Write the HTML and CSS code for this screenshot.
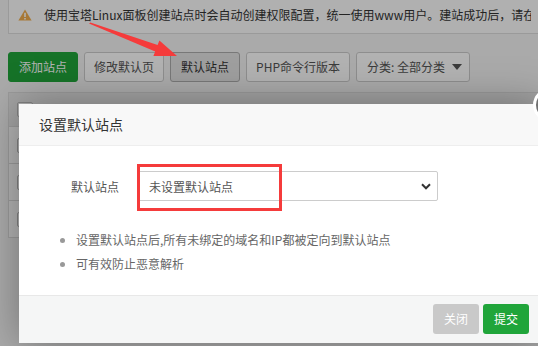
FILE: index.html
```html
<!DOCTYPE html>
<html lang="zh-CN">
<head>
<meta charset="utf-8">
<title>设置默认站点</title>
<link rel="stylesheet" href="styles.css">
</head>
<body>
<div class="page">
  <div class="alert">
    <svg class="warn" width="14" height="12" viewBox="0 0 14 12"><path d="M7 0.5 L13.6 11.5 L0.4 11.5 Z" fill="#f0ad4e"/><rect x="6.2" y="3.8" width="1.6" height="4.2" fill="#fff"/><rect x="6.2" y="9" width="1.6" height="1.5" fill="#fff"/></svg>
    <span class="alert-text">使用宝塔Linux面板创建站点时会自动创建权限配置，统一使用www用户。建站成功后，请在网站设置中开启防跨站</span>
  </div>
  <div class="toolbar">
    <button class="btn btn-green">添加站点</button>
    <button class="btn btn-tight">修改默认页</button>
    <button class="btn btn-active">默认站点</button>
    <button class="btn btn-tight">PHP命令行版本</button>
    <button class="btn btn-select">分类: 全部分类 <span class="caret"></span></button>
  </div>
  <div class="table">
    <div class="row row-head"><span class="check"></span><span class="col">网站名</span><span class="col">状态</span><span class="col">备份</span><span class="col">根目录</span></div>
    <div class="row"><span class="check"></span></div>
    <div class="row"><span class="check"></span></div>
    <div class="row"><span class="check"></span></div>
  </div>
</div>
<div class="overlay"></div>
<div class="dialog">
  <div class="dialog-title">设置默认站点</div>
  <div class="dialog-body">
    <div class="form-row">
      <label class="form-label">默认站点</label>
      <div class="select">
        <span>未设置默认站点</span>
        <svg width="10" height="7" viewBox="0 0 10 7"><polyline points="1,1.3 5,5.3 9,1.3" fill="none" stroke="#333" stroke-width="2"/></svg>
      </div>
    </div>
    <ul class="tips">
      <li>设置默认站点后,所有未绑定的域名和IP都被定向到默认站点</li>
      <li>可有效防止恶意解析</li>
    </ul>
  </div>
  <div class="dialog-foot">
    <button class="fbtn fbtn-gray">关闭</button>
    <button class="fbtn fbtn-green">提交</button>
  </div>
</div>
<div class="close-dot"></div>
<div class="mark-box"></div>
<svg class="mark-arrow" width="538" height="346" viewBox="0 0 538 346"><polygon points="89,23.6 90.4,22.4 157.6,44.9 159.4,40.5 177,56 153.4,55.9 155.2,51.5" fill="#f53b3b"/></svg>
</body>
</html>
```

FILE: styles.css
```css
* { box-sizing: border-box; }
html, body { margin: 0; padding: 0; }
body {
  width: 538px;
  height: 346px;
  overflow: hidden;
  position: relative;
  background: #f4f4f4;
  font-family: "Noto Sans CJK SC", "Liberation Sans", sans-serif;
  color: #333;
}
.page { padding-left: 8px; }
.alert {
  height: 34px;
  background: #fcfcfc;
  border-left: 1px solid #ddd;
  border-bottom: 1px solid #ddd;
  display: flex;
  align-items: flex-start;
  padding-left: 9px;
  white-space: nowrap;
  overflow: hidden;
}
.warn { margin-top: 9px; flex: none; }
.alert-text {
  margin-left: 12px;
  width: 487px;
  flex: none;
  overflow: hidden;
  font-size: 12px;
  line-height: 30px;
  color: #333;
}
.toolbar {
  margin-top: 18px;
  display: flex;
  gap: 6px;
  white-space: nowrap;
}
.btn {
  height: 30px;
  padding: 0 10px;
  border: 1px solid #ccc;
  border-radius: 3px;
  background: #fff;
  color: #555;
  font: 12px/28px "Noto Sans CJK SC", "Liberation Sans", sans-serif;
  flex: none;
}
.btn-tight { padding: 0 9px; }
.btn-green { background: #20a53a; border-color: #20a53a; color: #fff; }
.btn-active { background: #e4e4e4; border-color: #adadad; color: #333; }
.btn-select { display: flex; align-items: center; gap: 7px; padding: 0 7px 0 10px; }
.caret {
  width: 0; height: 0;
  border-left: 5px solid transparent;
  border-right: 5px solid transparent;
  border-top: 6px solid #555;
}
.table {
  margin-top: 10px;
  border-top: 1px solid #ddd;
  border-left: 1px solid #ddd;
}
.row {
  height: 37px;
  border-bottom: 1px solid #ddd;
  display: flex;
  align-items: center;
  padding-left: 8px;
  background: #fff;
}
.row-head { height: 34px; background: #eaeaea; }
.check {
  width: 16px; height: 15px;
  border: 1px solid #bbb;
  border-radius: 2px;
  background: #fff;
  flex: none;
}
.col { font-size: 12px; color: #666; margin-left: 90px; }
.overlay {
  position: absolute;
  inset: 0;
  background: rgba(0, 0, 0, 0.3);
}
.dialog {
  position: absolute;
  left: 19px;
  top: 104px;
  width: 525px;
  background: #fff;
  box-shadow: 1px 1px 40px rgba(0, 0, 0, 0.35);
  display: flex;
  flex-direction: column;
}
.dialog-title {
  height: 42px;
  background: #f8f8f8;
  border-bottom: 1px solid #eee;
  padding-left: 20px;
  font-size: 14px;
  line-height: 41px;
  color: #333;
}
.dialog-body { height: 149px; padding-top: 25px; }
.form-row { display: flex; align-items: center; }
.form-label {
  width: 100px;
  margin-right: 18px;
  text-align: right;
  font-size: 12px;
  color: #555;
}
.select {
  width: 301px;
  height: 30px;
  border: 1px solid #ccc;
  border-radius: 2px;
  display: flex;
  align-items: center;
  justify-content: space-between;
  padding: 0 6px 0 11px;
  font-size: 12px;
  color: #555;
}
.tips {
  margin: 27px 0 0 0;
  padding-left: 57px;
  color: #666;
  font-size: 12px;
  line-height: 24px;
}
.tips li::marker { color: #999; }
.dialog-foot {
  height: 48px;
  border-top: 1px solid #e8e8e8;
  background: #f5f6f6;
  display: flex;
  justify-content: flex-end;
  align-items: flex-start;
  gap: 4px;
  padding: 8px 15px 0 0;
}
.fbtn {
  width: 46px;
  height: 30px;
  border: none;
  border-radius: 3px;
  color: #fff;
  font: 12px/30px "Noto Sans CJK SC", "Liberation Sans", sans-serif;
  padding: 0;
}
.fbtn-gray { background: #c9c9c9; }
.fbtn-green { background: #20a53a; }
.close-dot {
  position: absolute;
  left: 533px;
  top: 88px;
  width: 34px;
  height: 34px;
  border-radius: 50%;
  background: #707070;
  border: 3px solid #fff;
}
.mark-box {
  position: absolute;
  left: 137px;
  top: 164px;
  width: 145px;
  height: 47px;
  border: 3px solid #f53b3b;
}
.mark-arrow { position: absolute; left: 0; top: 0; }
```
